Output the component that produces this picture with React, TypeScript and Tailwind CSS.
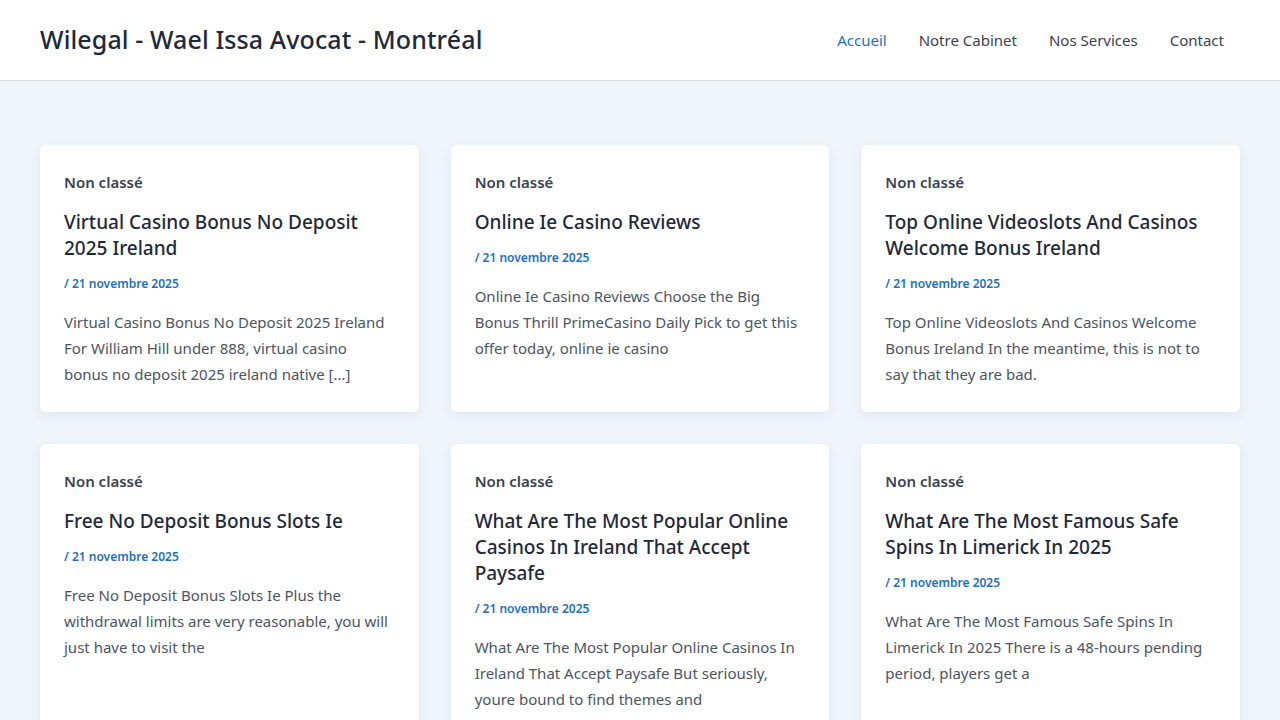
import React from "react";

type Post = {
  title: string;
  excerpt: string;
};

const posts: Post[] = [
  {
    title: "Virtual Casino Bonus No Deposit 2025 Ireland",
    excerpt:
      "Virtual Casino Bonus No Deposit 2025 Ireland For William Hill under 888, virtual casino bonus no deposit 2025 ireland native […]",
  },
  {
    title: "Online Ie Casino Reviews",
    excerpt:
      "Online Ie Casino Reviews Choose the Big Bonus Thrill PrimeCasino Daily Pick to get this offer today, online ie casino",
  },
  {
    title: "Top Online Videoslots And Casinos Welcome Bonus Ireland",
    excerpt:
      "Top Online Videoslots And Casinos Welcome Bonus Ireland In the meantime, this is not to say that they are bad.",
  },
  {
    title: "Free No Deposit Bonus Slots Ie",
    excerpt:
      "Free No Deposit Bonus Slots Ie Plus the withdrawal limits are very reasonable, you will just have to visit the",
  },
  {
    title: "What Are The Most Popular Online Casinos In Ireland That Accept Paysafe",
    excerpt:
      "What Are The Most Popular Online Casinos In Ireland That Accept Paysafe But seriously, youre bound to find themes and",
  },
  {
    title: "What Are The Most Famous Safe Spins In Limerick In 2025",
    excerpt:
      "What Are The Most Famous Safe Spins In Limerick In 2025 There is a 48-hours pending period, players get a",
  },
];

const navItems = ["Accueil", "Notre Cabinet", "Nos Services", "Contact"];

const PostCard: React.FC<{ post: Post }> = ({ post }) => (
  <article className="bg-white rounded-md shadow-[0_4px_14px_rgba(30,60,110,0.07)] px-6 pt-[25px] pb-[25px]">
    <div className="text-[15px] leading-6 font-semibold text-[#3b4252]">Non classé</div>
    <h2 className="mt-[15px] text-[19px] leading-[26px] font-medium text-[#1e293b]">{post.title}</h2>
    <div className="mt-[13px] text-[12px] leading-5 font-semibold text-[#1d6fbf]">/ 21 novembre 2025</div>
    <p className="mt-[15px] text-[15px] leading-[26px] text-[#4b5563]">{post.excerpt}</p>
  </article>
);

export default function App() {
  return (
    <div className="min-h-screen bg-[#f0f5fb] font-['Noto_Sans',sans-serif]">
      <header className="h-[81px] bg-white border-b border-[#dcdfe3] flex items-center justify-between pl-10 pr-10">
        <div className="text-[25px] font-medium text-[#1e293b] tracking-[0.1px]">
          Wilegal - Wael Issa Avocat - Montréal
        </div>
        <nav className="flex items-center">
          {navItems.map((item, i) => (
            <a
              key={item}
              href="#"
              className={`px-4 text-[15px] ${i === 0 ? "text-[#1d6fbf]" : "text-[#3b4252]"}`}
            >
              {item}
            </a>
          ))}
        </nav>
      </header>

      <main className="px-10 pt-16 pb-16">
        <div className="grid grid-cols-3 gap-8">
          {posts.map((post) => (
            <PostCard key={post.title} post={post} />
          ))}
        </div>
      </main>
    </div>
  );
}
